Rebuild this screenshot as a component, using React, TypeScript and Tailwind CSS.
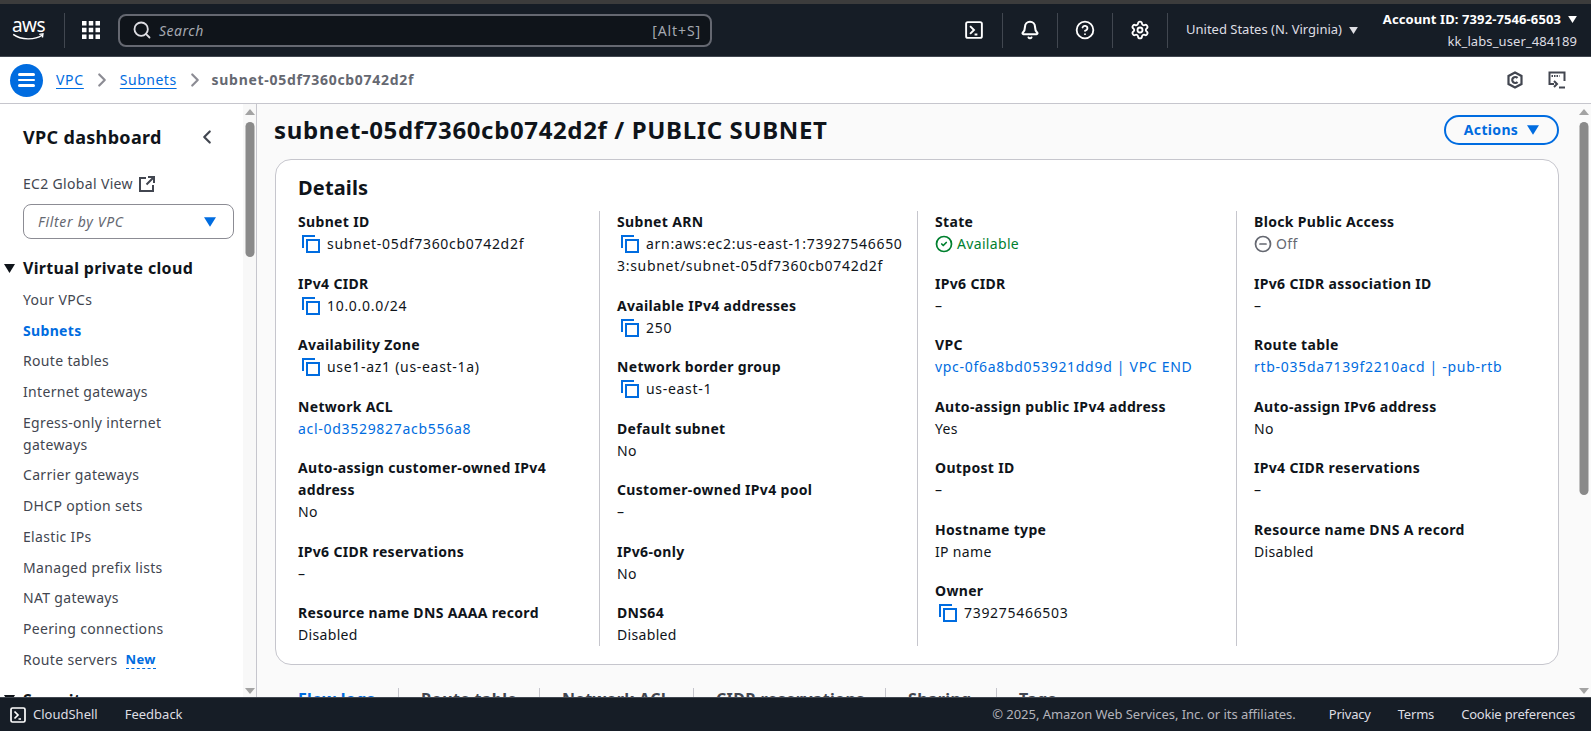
import { Bell, ChevronLeft, ChevronRight, CircleCheck, CircleHelp, CircleMinus, Search, Settings } from "lucide-react";

type Field = {
  label: string;
  value: string;
  copy?: boolean;
  link?: boolean;
  status?: "ok" | "off";
};

const columns: { width: string; fields: Field[] }[] = [
  {
    width: "w-[301px]",
    fields: [
      { label: "Subnet ID", value: "subnet-05df7360cb0742d2f", copy: true },
      { label: "IPv4 CIDR", value: "10.0.0.0/24", copy: true },
      { label: "Availability Zone", value: "use1-az1 (us-east-1a)", copy: true },
      { label: "Network ACL", value: "acl-0d3529827acb556a8", link: true },
      { label: "Auto-assign customer-owned IPv4 address", value: "No" },
      { label: "IPv6 CIDR reservations", value: "–" },
      { label: "Resource name DNS AAAA record", value: "Disabled" },
    ],
  },
  {
    width: "w-[318px]",
    fields: [
      { label: "Subnet ARN", value: "arn:aws:ec2:us-east-1:739275466503:subnet/subnet-05df7360cb0742d2f", copy: true },
      { label: "Available IPv4 addresses", value: "250", copy: true },
      { label: "Network border group", value: "us-east-1", copy: true },
      { label: "Default subnet", value: "No" },
      { label: "Customer-owned IPv4 pool", value: "–" },
      { label: "IPv6-only", value: "No" },
      { label: "DNS64", value: "Disabled" },
    ],
  },
  {
    width: "w-[319px]",
    fields: [
      { label: "State", value: "Available", status: "ok" },
      { label: "IPv6 CIDR", value: "–" },
      { label: "VPC", value: "vpc-0f6a8bd053921dd9d | VPC END", link: true },
      { label: "Auto-assign public IPv4 address", value: "Yes" },
      { label: "Outpost ID", value: "–" },
      { label: "Hostname type", value: "IP name" },
      { label: "Owner", value: "739275466503", copy: true },
    ],
  },
  {
    width: "flex-1",
    fields: [
      { label: "Block Public Access", value: "Off", status: "off" },
      { label: "IPv6 CIDR association ID", value: "–" },
      { label: "Route table", value: "rtb-035da7139f2210acd | -pub-rtb", link: true },
      { label: "Auto-assign IPv6 address", value: "No" },
      { label: "IPv4 CIDR reservations", value: "–" },
      { label: "Resource name DNS A record", value: "Disabled" },
    ],
  },
];

const navItems = [
  "Your VPCs",
  "Subnets",
  "Route tables",
  "Internet gateways",
  "Egress-only internet gateways",
  "Carrier gateways",
  "DHCP option sets",
  "Elastic IPs",
  "Managed prefix lists",
  "NAT gateways",
  "Peering connections",
];

const tabs = [
  { name: "Flow logs", width: "w-[100px]" },
  { name: "Route table", width: "w-[141px]" },
  { name: "Network ACL", width: "w-[154px]" },
  { name: "CIDR reservations", width: "w-[192px]" },
  { name: "Sharing", width: "w-[111px]" },
  { name: "Tags", width: "w-[60px]" },
];

function CopyIcon() {
  return (
    <svg viewBox="0 0 18 18" className="inline-block align-[-4px] ml-[4px] mr-[7px] w-[18px] h-[18px] text-[#006ce0]" fill="none" stroke="currentColor" strokeWidth="2">
      <path d="M1 13V1h12" />
      <rect x="5" y="5" width="12" height="12" />
    </svg>
  );
}

function TerminalIcon({ className }: { className: string }) {
  return (
    <svg viewBox="0 0 16 16" className={className} fill="none" stroke="currentColor" strokeWidth="1.7">
      <rect x="1" y="1" width="14" height="14" rx="1.5" />
      <path d="M4.5 4.5 8 8l-3.5 3.5M8.5 12H11" />
    </svg>
  );
}

function Caret({ className }: { className: string }) {
  return (
    <svg viewBox="0 0 10 8" className={className} fill="currentColor">
      <path d="M0 0h10L5 8z" />
    </svg>
  );
}

function Scrollbar({ thumb }: { thumb: string }) {
  return (
    <div className="relative w-full h-full">
      <div className="absolute top-[5px] left-1/2 -translate-x-1/2 w-0 h-0 border-x-[5px] border-x-transparent border-b-[6px] border-b-[#a3a3a3]" />
      <div className={`absolute top-[18px] left-1/2 -translate-x-1/2 w-[9px] rounded-full bg-[#8a8a8a] ${thumb}`} />
      <div className="absolute bottom-[3px] left-1/2 -translate-x-1/2 w-0 h-0 border-x-[5px] border-x-transparent border-t-[6px] border-t-[#a3a3a3]" />
    </div>
  );
}

function Header() {
  return (
    <header className="h-[53px] shrink-0 bg-[#161d26] flex items-center text-white border-b border-[#414750]">
      <div className="w-[64px] pl-[11px] flex flex-col items-center shrink-0 pr-[18px]">
        <span className="text-[19px] leading-[15px] font-normal tracking-[-0.5px]">aws</span>
        <svg viewBox="0 0 36 10" className="w-[35px] h-[9px]" fill="none" stroke="white" strokeWidth="1.6">
          <path d="M1 1.5c9 6.5 24 6.5 32 1M30 1.5l4-.5-.5 4" />
        </svg>
      </div>
      <div className="w-px h-[35px] bg-[#414750]" />
      <svg viewBox="0 0 18 18" className="w-[18px] h-[18px] ml-[17px] mr-[18px] shrink-0" fill="white">
        <rect x="0" y="0" width="4.5" height="4.5" />
        <rect x="6.75" y="0" width="4.5" height="4.5" />
        <rect x="13.5" y="0" width="4.5" height="4.5" />
        <rect x="0" y="6.75" width="4.5" height="4.5" />
        <rect x="6.75" y="6.75" width="4.5" height="4.5" />
        <rect x="13.5" y="6.75" width="4.5" height="4.5" />
        <rect x="0" y="13.5" width="4.5" height="4.5" />
        <rect x="6.75" y="13.5" width="4.5" height="4.5" />
        <rect x="13.5" y="13.5" width="4.5" height="4.5" />
      </svg>
      <div className="w-[594px] h-[33px] shrink-0 rounded-lg border-2 border-[#656871] bg-[#0f141a] flex items-center pl-[12px] pr-[9px] text-[14px] tracking-[0.5px]">
        <Search className="w-[20px] h-[20px] text-[#dedee3]" strokeWidth={2.2} />
        <span className="ml-[7px] italic text-[#a4a8b0]">Search</span>
        <span className="ml-auto text-[#a4a8b0] tracking-[0.9px]">[Alt+S]</span>
      </div>
      <div className="ml-auto flex items-center h-full tracking-normal">
        <div className="w-[59px] h-[35px] flex items-center justify-center pl-[3px]">
          <TerminalIcon className="w-[18px] h-[18px]" />
        </div>
        <div className="w-px h-[35px] bg-[#414750]" />
        <div className="w-[54px] h-[35px] flex items-center justify-center">
          <Bell className="w-[20px] h-[20px]" strokeWidth={2.5} />
        </div>
        <div className="w-px h-[35px] bg-[#414750]" />
        <div className="w-[54px] h-[35px] flex items-center justify-center">
          <CircleHelp className="w-[20px] h-[20px]" strokeWidth={2.2} />
        </div>
        <div className="w-px h-[35px] bg-[#414750]" />
        <div className="w-[54px] h-[35px] flex items-center justify-center">
          <Settings className="w-[20px] h-[20px]" strokeWidth={2.2} />
        </div>
        <div className="w-px h-[35px] bg-[#414750]" />
        <div className="w-[209px] pl-[18px] flex items-center text-[13px] text-[#dedee3]">
          <span>United States (N. Virginia)</span>
          <Caret className="w-[9px] h-[7px] ml-[7px]" />
        </div>
        <div className="pr-[14px] w-[214px] flex flex-col items-end text-[13px] leading-[22px] whitespace-nowrap">
          <div className="flex items-center font-bold tracking-[0.1px]">
            <span>Account ID: 7392-7546-6503</span>
            <Caret className="w-[9px] h-[7px] ml-[7px]" />
          </div>
          <span className="text-[#dedee3] tracking-[0.1px]">kk_labs_user_484189</span>
        </div>
      </div>
    </header>
  );
}

function Breadcrumbs() {
  return (
    <div className="h-[47px] shrink-0 bg-white border-b border-[#c6c6cd] flex items-center text-[14px]">
      <div className="ml-[10px] w-[33px] h-[33px] rounded-full bg-[#006ce0] flex flex-col items-center justify-center gap-[3px]">
        <span className="w-[17px] h-[2.5px] bg-white rounded-full" />
        <span className="w-[17px] h-[2.5px] bg-white rounded-full" />
        <span className="w-[17px] h-[2.5px] bg-white rounded-full" />
      </div>
      <a className="ml-[13px] mb-[1px] text-[#006ce0] underline underline-offset-[3px] tracking-[0.7px]">VPC</a>
      <ChevronRight className="w-[22px] h-[22px] mx-[7px] text-[#8c8c94]" strokeWidth={2.4} />
      <a className="mb-[1px] text-[#006ce0] underline underline-offset-[3px] tracking-[0.5px]">Subnets</a>
      <ChevronRight className="w-[22px] h-[22px] ml-[7px] mr-[6px] text-[#8c8c94]" strokeWidth={2.4} />
      <span className="mb-[1px] font-bold text-[#656871] tracking-[0.7px]">subnet-05df7360cb0742d2f</span>
      <div className="ml-auto flex items-center gap-[24px] pr-[25px] text-[#424650]">
        <svg viewBox="0 0 18 18" className="w-[18px] h-[18px]" fill="none" stroke="currentColor" strokeWidth="2.2">
          <path d="M9 1.5 15.5 5v8L9 16.5 2.5 13V5z" />
          <path d="M11.5 7A3 3 0 1 0 11.5 11" />
        </svg>
        <svg viewBox="0 0 18 18" className="w-[18px] h-[18px]" fill="none" stroke="currentColor" strokeWidth="2">
          <path d="M6 13H1.5V1.5h15V10" />
          <path d="M3.5 5h8" strokeWidth="2" strokeDasharray="1.5 1" />
          <path d="M6 10l3 3-3 3M11 16.5h6" />
        </svg>
      </div>
    </div>
  );
}

function Sidebar() {
  return (
    <aside className="w-[257px] shrink-0 h-full bg-white border-r border-[#c6c6cd] flex overflow-hidden">
      <div className="w-[243px] shrink-0 pt-[19px]">
        <div className="pl-[23px] pr-[25px] flex items-center justify-between h-[28px]">
          <span className="text-[18px] font-bold text-[#0f141a]">VPC dashboard</span>
          <ChevronLeft className="w-[22px] h-[22px] text-[#424650]" strokeWidth={2.4} />
        </div>
        <div className="mt-[22px] pl-[23px] flex items-center gap-[6px] text-[14px] leading-[22px] text-[#424650]">
          <span>EC2 Global View</span>
          <svg viewBox="0 0 16 16" className="w-[16px] h-[16px]" fill="none" stroke="currentColor" strokeWidth="2">
            <path d="M7 2H1v13h13V9M9 1h6v6M15 1 7.5 8.5" />
          </svg>
        </div>
        <div className="mt-[9px] ml-[23px] w-[211px] h-[35px] rounded-lg border border-[#8c8c94] flex items-center justify-between pl-[14px] pr-[17px] text-[14px] italic text-[#656871] tracking-[0.7px]">
          <span>Filter by VPC</span>
          <Caret className="w-[12px] h-[10px] text-[#006ce0]" />
        </div>
        <div className="mt-[17px] flex items-center h-[24px] text-[#0f141a]">
          <Caret className="w-[11px] h-[9px] ml-[4px] mr-[8px]" />
          <span className="text-[16px] font-bold">Virtual private cloud</span>
        </div>
        <nav className="mt-[9px] pl-[23px] pr-[30px] flex flex-col gap-[8.7px] text-[14px] leading-[22px] text-[#424650]">
          {navItems.map((item) => (
            <a key={item} className={item === "Subnets" ? "font-bold text-[#006ce0]" : ""}>
              {item}
            </a>
          ))}
          <div className="flex items-center gap-[8px]">
            <span>Route servers</span>
            <span className="text-[13px] leading-[18px] font-bold text-[#006ce0] border-b border-dashed border-[#006ce0]">New</span>
          </div>
        </nav>
        <div className="mt-[17px] flex items-center h-[24px] text-[#0f141a]">
          <Caret className="w-[11px] h-[9px] ml-[4px] mr-[8px]" />
          <span className="text-[16px] font-bold">Security</span>
        </div>
      </div>
      <div className="flex-1 h-full bg-[#f8f8f8]">
        <Scrollbar thumb="h-[135px]" />
      </div>
    </aside>
  );
}

function DetailField({ field }: { field: Field }) {
  // ids and numbers run wider than plain words in the original face
  const numeric = /\d/.test(field.value);
  return (
    <div>
      <div className="font-bold text-[#0f141a]">{field.label}</div>
      {field.copy ? (
        <div className={`break-all text-[#0f141a] ${numeric ? "tracking-[0.7px]" : ""}`}>
          <CopyIcon />
          {field.value}
        </div>
      ) : field.status === "ok" ? (
        <div className="flex items-center gap-[4px] text-[#00802f]">
          <CircleCheck className="w-[18px] h-[18px]" strokeWidth={2.3} />
          <span>{field.value}</span>
        </div>
      ) : field.status === "off" ? (
        <div className="flex items-center gap-[4px] text-[#656871]">
          <CircleMinus className="w-[18px] h-[18px]" strokeWidth={2.3} />
          <span>{field.value}</span>
        </div>
      ) : field.link ? (
        <a className={`block text-[#006ce0] ${numeric ? "tracking-[0.7px]" : ""}`}>{field.value}</a>
      ) : (
        <div className="text-[#0f141a]">{field.value}</div>
      )}
    </div>
  );
}

function Details() {
  return (
    <section className="mt-[12px] ml-[1px] w-[1284px] h-[506px] shrink-0 rounded-2xl border border-[#c6c6cd] bg-white pl-[22px] pt-[14px]">
      <h2 className="text-[20px] leading-[28px] font-bold text-[#0f141a] tracking-[0.15px]">Details</h2>
      <div className="mt-[9px] flex text-[14px] leading-[22px]">
        {columns.map((col, i) => (
          <div
            key={i}
            className={`${col.width} flex flex-col gap-[17.5px] pr-[11px] h-[435px] ${i > 0 ? "pl-[17px] border-l border-[#c6c6cd]" : ""}`}
          >
            {col.fields.map((f) => (
              <DetailField key={f.label} field={f} />
            ))}
          </div>
        ))}
      </div>
    </section>
  );
}

function Footer() {
  return (
    <footer className="h-[34px] shrink-0 bg-[#161d26] border-t border-[#414750] flex items-center text-[13px] tracking-[-0.2px] text-[#dedee3] pr-[16px]">
      <TerminalIcon className="ml-[10px] w-[16px] h-[16px] text-white" />
      <span className="ml-[7px] tracking-normal">CloudShell</span>
      <span className="ml-[27px] tracking-normal">Feedback</span>
      <span className="ml-auto text-[#b4b4bb] tracking-[-0.05px]">© 2025, Amazon Web Services, Inc. or its affiliates.</span>
      <span className="ml-[33px]">Privacy</span>
      <span className="ml-[27px]">Terms</span>
      <span className="ml-[27px]">Cookie preferences</span>
    </footer>
  );
}

export default function App() {
  return (
    <div className="w-[1591px] h-[731px] overflow-hidden flex flex-col font-['Noto_Sans',sans-serif] bg-[#fafafa] tracking-[0.33px]">
      <div className="h-[4px] shrink-0 bg-[#3c3c3c]" />
      <Header />
      <Breadcrumbs />
      <div className="flex-1 min-h-0 flex">
        <Sidebar />
        <main className="flex-1 min-w-0 h-full overflow-hidden pl-[17px] flex flex-col">
          <div className="flex items-center justify-between w-[1285px] pt-[8px] h-[43px] shrink-0">
            <h1 className="text-[24px] leading-[30px] font-bold text-[#0f141a] tracking-[0.63px]">subnet-05df7360cb0742d2f / PUBLIC SUBNET</h1>
            <button className="w-[115px] h-[30px] rounded-full border-2 border-[#006ce0] text-[#006ce0] text-[14px] font-bold flex items-center justify-center gap-[9px]">
              Actions
              <Caret className="w-[12px] h-[10px]" />
            </button>
          </div>
          <Details />
          <div className="mt-[23px] ml-[24px] flex text-[16px] leading-[22px] font-bold text-[#424650] shrink-0">
            {tabs.map((t, i) => (
              <div key={t.name} className={`${t.width} shrink-0 ${i > 0 ? "border-l border-[#c6c6cd] pl-[22px]" : ""}`}>
                <span className={i === 0 ? "text-[#006ce0]" : ""}>{t.name}</span>
              </div>
            ))}
          </div>
        </main>
        <div className="w-[14px] shrink-0 h-full">
          <Scrollbar thumb="h-[373px]" />
        </div>
      </div>
      <Footer />
    </div>
  );
}
